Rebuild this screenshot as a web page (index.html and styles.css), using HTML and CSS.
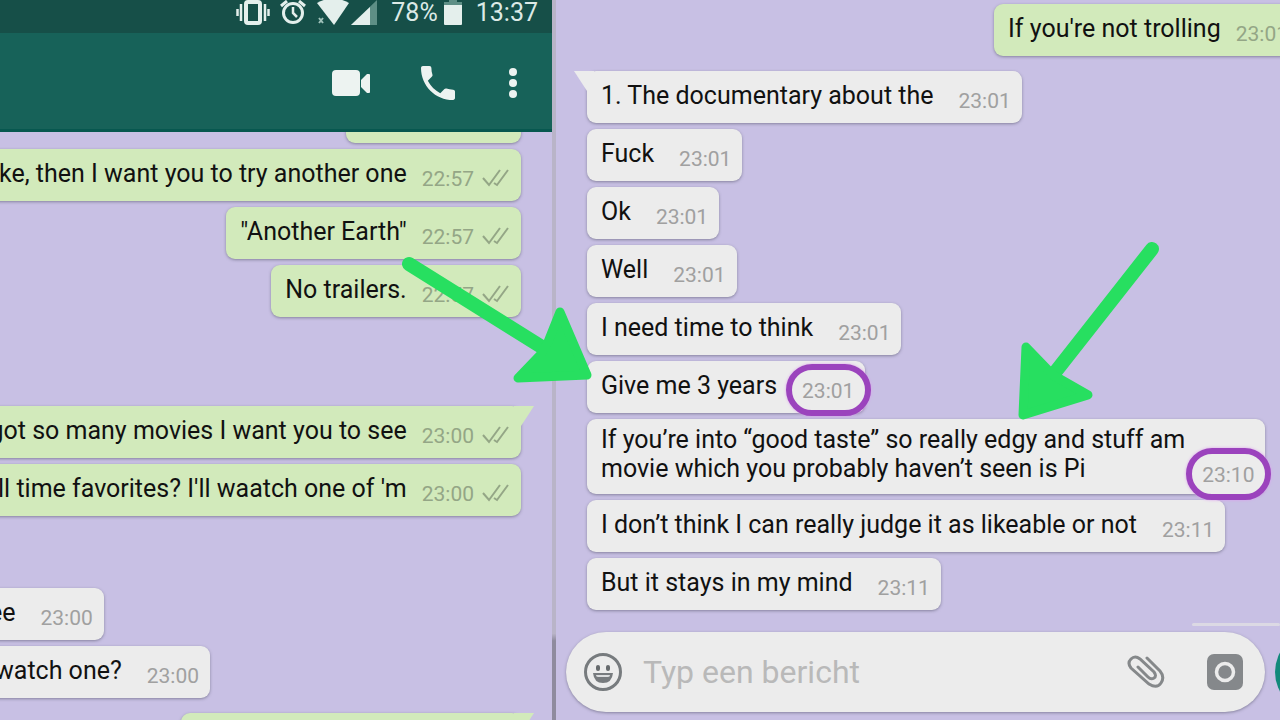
FILE: index.html
```
<!DOCTYPE html>
<html lang="nl">
<head>
    <meta charset="UTF-8">
    <meta name="viewport" content="width=device-width, initial-scale=1.0">
    <title>Chat</title>
    <link rel="stylesheet" href="styles.css">
</head>
<body>
    <!-- shared double tick -->
    <svg class="defs" width="0" height="0">
        <symbol id="ticks" viewBox="0 0 27 20">
            <path d="M1 10l6 7L18 2M12 15l3 2L26 2" fill="none" stroke="#94a686" stroke-width="2"/>
        </symbol>
    </svg>

    <main class="screens">
        <section class="screen left">
            <header>
                <div class="status">
                    <svg class="vibrate" width="34" height="26" viewBox="0 0 34 26">
                        <rect x="10" y="2" width="14" height="21" rx="2" fill="none" stroke="#e4efec" stroke-width="4"/>
                        <path d="M5 4v17M29 4v17M1.500 9v7M32.500 9v7" stroke="#e4efec" stroke-width="2.500"/>
                    </svg>
                    <svg class="alarm" width="26" height="26" viewBox="0 0 26 26" fill="none" stroke="#e4efec">
                        <circle cx="13" cy="13" r="9.500" stroke-width="3"/>
                        <path d="M13 7v6l4 4" stroke-width="2.500"/>
                        <path d="M1 6l6-5M25 6l-6-5" stroke-width="3"/>
                    </svg>
                    <svg class="wifi" width="32" height="26" viewBox="0 0 32 26">
                        <path d="M0 3Q16-6 32 3L17 25Z" fill="#e4efec"/>
                        <path d="M2 18l4 5M6 18l-4 5" stroke="#9fc2ba" stroke-width="2"/>
                    </svg>
                    <svg class="signal" width="26" height="26" viewBox="0 0 26 26">
                        <path d="M26 0v25H0Z" fill="#5e8f86"/>
                        <path d="M19 7v18H0Z" fill="#e4efec"/>
                    </svg>
                    <span class="percent">78%</span>
                    <svg class="battery" width="18" height="26" viewBox="0 0 18 26">
                        <path d="M0 2h5V0h8v2h5v4H0Z" fill="#5e8f86"/>
                        <path d="M0 5h18v19q0 1-1 1H1q-1 0-1-1Z" fill="#e4efec"/>
                    </svg>
                    <span>13:37</span>
                </div>
                <nav class="actions">
                    <button type="button" class="video" aria-label="Video">
                        <svg width="40" height="26" viewBox="0 0 40 26" fill="#edf3f1">
                            <rect x="1" y="0" width="28" height="26" rx="4"/>
                            <path d="M30 10l6-6h2q1 0 1 1v17q0 1-1 1h-2l-6-6Z"/>
                        </svg>
                    </button>
                    <button type="button" class="call" aria-label="Bellen">
                        <svg width="34" height="34" viewBox="3 3 18 18" fill="#edf3f1">
                            <path d="M6.620 10.790c1.440 2.830 3.760 5.140 6.590 6.590l2.200-2.200c.27-.27.67-.36 1.020-.24 1.120.37 2.330.57 3.570.57.55 0 1 .45 1 1V20c0 .55-.45 1-1 1-9.390 0-17-7.610-17-17 0-.55.45-1 1-1h3.500c.55 0 1 .45 1 1 0 1.250.2 2.450.57 3.570.11.35.03.74-.25 1.020z"/>
                        </svg>
                    </button>
                    <button type="button" aria-label="Menu">
                        <svg width="10" height="32" viewBox="0 0 10 32" fill="#edf3f1">
                            <circle cx="5" cy="5" r="4"/>
                            <circle cx="5" cy="16" r="4"/>
                            <circle cx="5" cy="27" r="4"/>
                        </svg>
                    </button>
                </nav>
            </header>

            <div class="chat">
                <div class="msg out scrolled"></div>
                <div class="msg out"><p>ke, then I want you to try another one</p><time>22:57</time><svg class="ticks"><use href="#ticks"/></svg></div>
                <div class="msg out"><p>"Another Earth"</p><time>22:57</time><svg class="ticks"><use href="#ticks"/></svg></div>
                <div class="msg out"><p>No trailers.</p><time>22:57</time><svg class="ticks"><use href="#ticks"/></svg></div>

                <div class="msg out tail later"><p>got so many movies I want you to see</p><time>23:00</time><svg class="ticks"><use href="#ticks"/></svg></div>
                <div class="msg out"><p>ll time favorites? I'll waatch one of 'm</p><time>23:00</time><svg class="ticks"><use href="#ticks"/></svg></div>

                <div class="msg in reply"><p>ee</p><time>23:00</time></div>
                <div class="msg in question"><p>watch one?</p><time>23:00</time></div>
                <div class="msg out tail next"></div>
            </div>
        </section>

        <section class="screen right">
            <div class="chat">
                <div class="msg out wide"><p>If you're not trolling</p><time>23:01</time><svg class="ticks"><use href="#ticks"/></svg></div>
                <div class="msg in tail first"><p>1. The documentary about the</p><time>23:01</time></div>
                <div class="msg in"><p>Fuck</p><time>23:01</time></div>
                <div class="msg in"><p>Ok</p><time>23:01</time></div>
                <div class="msg in"><p>Well</p><time>23:01</time></div>
                <div class="msg in"><p>I need time to think</p><time>23:01</time></div>
                <div class="msg in marked"><p>Give me 3 years</p><time class="ring">23:01</time></div>
                <div class="msg in marked long"><p>If you’re into “good taste” so really edgy and stuff am<br>movie which you probably haven’t seen is Pi</p><time class="ring">23:10</time></div>
                <div class="msg in"><p>I don’t think I can really judge it as likeable or not</p><time>23:11</time></div>
                <div class="msg in"><p>But it stays in my mind</p><time>23:11</time></div>
            </div>

            <div class="edge"></div>
            <form class="composer">
                <div class="field">
                    <button type="button" aria-label="Emoji">
                        <svg width="38" height="38" viewBox="0 0 38 38">
                            <circle cx="19" cy="19" r="17.500" fill="none" stroke="#777b7e" stroke-width="3"/>
                            <rect x="12" y="12" width="4" height="6" rx="2" fill="#666a6d"/>
                            <rect x="22" y="12" width="4" height="6" rx="2" fill="#666a6d"/>
                            <path d="M9 20h20q-1 10-10 10T9 20Z" fill="#777b7e"/>
                            <path d="M12 22h14q0 2-2 2H14q-2 0-2-2Z" fill="#dcdedf"/>
                        </svg>
                    </button>
                    <input type="text" placeholder="Typ een bericht" aria-label="Typ een bericht">
                    <button type="button" class="attach" aria-label="Bijlage">
                        <svg width="38" height="36" viewBox="0 0 38 36">
                            <path d="M20 4L33 17Q38 23 34 29T22 30L4 14Q0 9 4 5T13 5L27 18Q30 22 27 24T21 23L11 13" fill="none" stroke="#85888a" stroke-width="3" stroke-linecap="round"/>
                        </svg>
                    </button>
                    <button type="button" aria-label="Camera">
                        <svg width="36" height="36" viewBox="0 0 36 36">
                            <rect width="36" height="36" rx="7" fill="#85888b"/>
                            <circle cx="18" cy="18" r="8.500" fill="none" stroke="#ececec" stroke-width="3.500"/>
                        </svg>
                    </button>
                </div>
                <button type="button" class="mic" aria-label="Spraakbericht"></button>
            </form>
        </section>

        <!-- marker arrows on top of the chats -->
        <svg class="arrow arrow-1" width="200" height="140" viewBox="400 250 200 140">
            <path d="M409 264L545 349" stroke-width="14"/>
            <path d="M560 312L587 375L518 378L541 354L548 342Z" stroke-width="9"/>
        </svg>
        <svg class="arrow arrow-2" width="160" height="190" viewBox="1010 236 160 190">
            <path d="M1152 249L1053 375" stroke-width="14"/>
            <path d="M1026 347L1023 415L1088 395L1053 375Z" stroke-width="9"/>
        </svg>
    </main>
</body>
</html>
```
FILE: styles.css
```
*, *::before, *::after {
    margin: 0;
    padding: 0;
    box-sizing: border-box;
}

body {
    background: #c8c0e4;
    color: #111;
    font-family: Roboto, "Liberation Sans", sans-serif;
    overflow: hidden;
}

button {
    border: none;
    background: none;
    display: flex;
}

svg { display: block; }
.defs { position: absolute; }

.screens {
    position: relative;
    display: flex;
    height: 100vh;
    overflow: hidden;
}

.screen {
    display: flex;
    flex-direction: column;
    overflow: hidden;
}

.left {
    flex: 0 0 556px;
    padding-right: 4px;
    background: linear-gradient(#b9b4c8 88%, #8f8b9e 89%) right / 4px 100% no-repeat;
}

.right { flex: 1; }

/* top bars */
.status {
    display: flex;
    align-items: flex-start;
    justify-content: flex-end;
    height: 33px;
    padding-right: 14px;
    background: #164f48;
    color: #dceae6;
    font-size: 25px;
    line-height: 26px;
}

.vibrate { margin-right: 10px; }
.alarm { margin-right: 11px; }
.wifi { margin-right: 2px; }
.signal { margin-right: 14px; }
.percent { margin-right: 6px; }
.battery { margin-right: 14px; }

.actions {
    display: flex;
    align-items: center;
    justify-content: flex-end;
    height: 99px;
    padding: 3px 34px 0 0;
    background: #176259;
    border-bottom: 3px solid #07574f;
}

.video { margin-right: 50px; }
.call { margin-right: 53px; }

/* messages */
.chat {
    flex: 1;
    display: flex;
    flex-direction: column;
    gap: 6px;
    padding: 0 31px;
    overflow: hidden;
}

.right .chat { padding-top: 4px; }

.msg {
    position: relative;
    flex: none;
    display: flex;
    height: 52px;
    padding: 10px 12px 0 14px;
    border-radius: 9px;
    box-shadow: 0 1px 3px rgba(70, 70, 90, 0.5);
    font-size: 25px;
    line-height: 29px;
    white-space: nowrap;
}

.in {
    align-self: flex-start;
    padding-right: 11px;
    background: #ececec;
}

.out {
    align-self: flex-end;
    background: #d2eabb;
}

.msg time {
    position: relative;
    margin: 6px 0 0 25px;
    color: #a0a0a0;
    font-size: 21px;
}

.out time {
    margin-left: 15px;
    color: #94a686;
}

.ticks {
    width: 27px;
    height: 20px;
    margin: 9px 0 0 8px;
}

.tail::before {
    content: "";
    position: absolute;
    top: 0;
    width: 20px;
    height: 20px;
}

.in.tail::before {
    left: -13px;
    background: #ececec;
    clip-path: polygon(0 0, 100% 0, 100% 100%, 65% 100%);
}

.out.tail::before {
    right: -13px;
    background: #d2eabb;
    clip-path: polygon(0 0, 100% 0, 35% 100%, 0 100%);
}

.scrolled {
    width: 175px;
    margin-top: -41px;
}

.later { margin-top: 83px; }
.reply { margin: 66px 0 0 -56px; }
.question { margin-left: -50px; }

.next {
    width: 340px;
    margin-top: 9px;
}

.wide { margin-right: -86px; }
.first { margin-top: 9px; }

.long {
    height: 75px;
    padding-top: 6px;
}

.msg.long time { margin: 36px 0 0 17px; }

/* keeps the ring above the next bubble */
.marked { z-index: 1; }

.ring::after {
    content: "";
    position: absolute;
    top: -13px;
    left: -16px;
    width: 85px;
    height: 52px;
    border: 6px solid #9b43bd;
    border-radius: 26px;
    box-shadow: 0 0 3px #dd9cf0;
}

/* bottom input */
.edge {
    align-self: flex-end;
    width: 88px;
    height: 3px;
    margin-bottom: 6px;
    border-radius: 3px;
    background: #dcd9e4;
}

.composer {
    display: flex;
    align-items: center;
    padding: 0 0 8px 10px;
}

.field {
    flex: 1;
    display: flex;
    align-items: center;
    height: 80px;
    padding: 0 22px 0 18px;
    border-radius: 40px;
    background: #ececec;
    box-shadow: 0 1px 3px rgba(70, 70, 90, 0.5);
}

.field input {
    flex: 1;
    min-width: 0;
    margin-left: 21px;
    border: none;
    outline: none;
    background: none;
    font: 32px Roboto, "Liberation Sans", sans-serif;
}

.field input::placeholder { color: #b9b9b9; }
.attach { margin-right: 42px; }

.mic {
    flex: none;
    width: 80px;
    height: 80px;
    margin: 0 -75px 0 10px;
    border-radius: 40px;
    background: #12897b;
}

/* arrows */
.arrow {
    position: absolute;
    z-index: 2;
    fill: #27df60;
    stroke: #27df60;
    stroke-linecap: round;
    stroke-linejoin: round;
}

.arrow-1 {
    top: 250px;
    left: 400px;
}

.arrow-2 {
    top: 236px;
    left: 1010px;
}
```
